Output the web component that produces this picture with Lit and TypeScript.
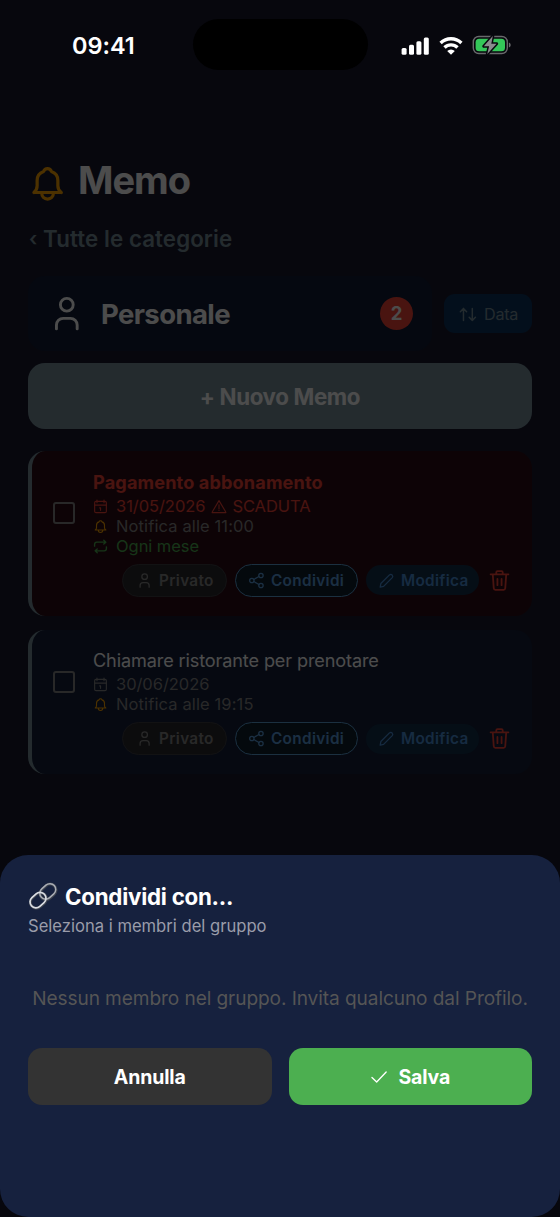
import { LitElement, html, css, svg, nothing } from "lit";
import { customElement, property } from "lit/decorators.js";

const shapes: Record<string, unknown> = {
  bell: svg`<path d="M78 374h360M78 374c30-26 42-52 42-88v-70c0-60 38-102 84-118 8-22 28-36 52-36s44 14 52 36c46 16 84 58 84 118v70c0 36 12 62 44 88M180 378c0 52 34 82 77 82s77-30 77-82"/>`,
  person: svg`<circle cx="260" cy="141" r="84"/><path d="M124 458v-50a88 88 0 0 1 88-88h96a88 88 0 0 1 88 88v50"/>`,
  sort: svg`<path d="M60 196l80-82 80 82M140 114v306M286 338l80 82 80-82M366 420V114"/>`,
  calendar: svg`<rect x="56" y="80" width="400" height="384" rx="48"/><path d="M136 36v90M376 36v90M56 210h400M228 304h30v84"/>`,
  warning: svg`<path d="M256 56L24 444a12 12 0 0 0 10 20h444a12 12 0 0 0 10-20zM256 200v136M256 384v10"/>`,
  repeat: svg`<path d="M368 42l70 66-70 66M430 108H130a76 76 0 0 0-76 76v60M144 470l-70-66 70-66M82 404h300a76 76 0 0 0 76-76v-60"/>`,
  share: svg`<circle cx="116" cy="256" r="66"/><circle cx="390" cy="104" r="66"/><circle cx="390" cy="408" r="66"/><path d="M174 224l158-88M174 288l158 88"/>`,
  pencil: svg`<path d="M66 452l20-104L346 88q44-34 80 4 36 40 4 78L168 432z"/>`,
  trash: svg`<path d="M106 118l22 310c2 22 16 36 36 36h184c20 0 34-14 36-36l22-310M58 118h396M184 112V76a28 28 0 0 1 28-28h88a28 28 0 0 1 28 28v36M210 220v140M302 220v140"/>`,
  check: svg`<path d="M460 116L190 400 56 270"/>`,
};

@customElement("line-icon")
class LineIcon extends LitElement {
  @property() name = "bell";
  static styles = css`
    :host { display: block; flex: none; width: 17px; height: 17px; }
    svg { display: block; width: 100%; height: 100%; fill: none; stroke: currentColor;
      stroke-width: var(--stroke, 38); stroke-linecap: round; stroke-linejoin: round; overflow: visible; }
  `;
  render() {
    return html`<svg viewBox="0 0 512 512">${shapes[this.name]}</svg>`;
  }
}

@customElement("status-bar")
class StatusBar extends LitElement {
  static styles = css`
    :host { display: grid; grid-template-columns: 192.5px 175px 192.5px; height: 90px; }
    .time { padding: 31px 0 0 72px; color: #fff; font-size: 23.500px; font-weight: 600; line-height: 30px; letter-spacing: -0.050px; }
    .island { height: 51px; margin-top: 19px; border-radius: 26px; background: #000; }
    .icons { display: flex; align-items: flex-start; padding: 36.500px 0 0 33.500px; }
    .signal { width: 28px; height: 18px; }
    .wifi { width: 24px; height: 18px; margin-left: 9.500px; }
    .battery { width: 39px; height: 20px; margin-left: 9.500px; margin-top: -1.500px; }
  `;
  render() {
    return html`
      <div class="time">09:41</div>
      <div class="island"></div>
      <div class="icons">
        <svg class="signal" viewBox="0 0 28 18" fill="#fff">
          <rect x=".6" y="11" width="5" height="6.800" rx="1.500" /><rect x="8" y="7.800" width="5" height="10" rx="1.500" />
          <rect x="15.400" y="4.200" width="5" height="13.600" rx="1.500" /><rect x="22.800" y=".4" width="5" height="17.400" rx="1.500" />
        </svg>
        <svg class="wifi" viewBox="0 0 24 18">
          <path d="M1.600 6a15 15 0 0 1 20.800 0M5.500 10.500a9.300 9.300 0 0 1 13 0" fill="none" stroke="#fff" stroke-width="3.400" />
          <path d="M8.200 13.900a5.500 5.500 0 0 1 7.600 0L12 17.700z" fill="#fff" />
        </svg>
        <svg class="battery" viewBox="0 0 39 20">
          <rect x="1.300" y="1.500" width="34" height="17" rx="5.500" fill="none" stroke="#69696c" stroke-width="1.400" />
          <path d="M36.900 7.500v5c2.400-.8 2.400-4.200 0-5z" fill="#69696c" />
          <rect x="3.600" y="3.700" width="29.400" height="12.600" rx="3.600" fill="#34c759" />
          <path d="M20.800 1L11.800 11.300h5.300L15.300 19l9.300-10.300H19.300z" fill="#8b8b8e" stroke="#08080e" stroke-width="3" paint-order="stroke" stroke-linejoin="round" />
        </svg>
      </div>
    `;
  }
}

interface Memo {
  title: string;
  date: string;
  time: string;
  repeat?: string;
  overdue?: boolean;
}

const memos: Memo[] = [
  { title: "Pagamento abbonamento", date: "31/05/2026", time: "11:00", repeat: "Ogni mese", overdue: true },
  { title: "Chiamare ristorante per prenotare", date: "30/06/2026", time: "19:15" },
];

@customElement("memo-card")
class MemoCard extends LitElement {
  @property({ attribute: false }) memo!: Memo;
  static styles = css`
    .card { box-sizing: border-box; height: 144px; padding: 19px 21px 0 21px; border-left: 4px solid #78909c; border-radius: 17px;
      background: #141f3a; display: grid; grid-template-columns: 40px 1fr; align-content: start; color: #888; }
    .card.overdue { height: 165px; padding-top: 20px; background: #2d0d16; }
    .box { box-sizing: border-box; width: 22px; height: 22px; margin-top: 22px; border: 2px solid #888; border-radius: 3px; }
    .overdue .box { margin-top: 31px; }
    .title { color: #fff; font-size: 18.100px; line-height: 22px; height: 25px; white-space: nowrap; letter-spacing: -0.120px; }
    .overdue .title { color: #f44336; font-weight: 700; letter-spacing: 0.150px; }
    .row { display: flex; align-items: center; height: 20px; font-size: 16.500px; letter-spacing: 0.120px; white-space: nowrap; }
    .date { letter-spacing: -0.060px; }
    .row line-icon { width: 15px; height: 15px; margin-right: 8px; }
    .overdue .date { color: #f44336; }
    .row .warn { margin: 0 5px 0 6px; width: 16px; }
    .bell { color: #ffa500; }
    .repeat { color: #4caf50; letter-spacing: -0.050px; }
    .repeat line-icon { --stroke: 46; }
    .actions { grid-column: 1 / 3; display: flex; align-items: center; justify-content: flex-end; margin-top: 8px; height: 33px; }
    .overdue .actions { margin-top: 7.500px; }
    .chip { box-sizing: border-box; display: flex; align-items: center; height: 33px; font-size: 15.300px; font-weight: 600;
      border-radius: 17px; letter-spacing: 0.350px; white-space: nowrap; }
    .chip line-icon { width: 17px; height: 17px; margin-right: 6px; }
    .private { width: 105px; padding-left: 13px; border: 1px solid #3d3d42; background: #2a2a2e; color: #888; margin-right: 8px; }
    .share { width: 122.500px; padding-left: 12px; border: 1.500px solid #5aa0d8; background: #10202c; color: #5a9fe0; margin-right: 8.500px; }
    .edit { width: 113px; height: 30px; padding-left: 12px; background: #13304c; color: #4a90d9; }
    .trash { width: 23px; height: 23px; margin: 0 0 0 9px; color: #f44336; --stroke: 40; }
  `;
  render() {
    const m = this.memo;
    return html`
      <div class="card ${m.overdue ? "overdue" : ""}">
        <div class="box"></div>
        <div>
          <div class="title">${m.title}</div>
          <div class="row date">
            <line-icon name="calendar"></line-icon>${m.date}${m.overdue
              ? html`<line-icon class="warn" name="warning"></line-icon>SCADUTA`
              : nothing}
          </div>
          <div class="row"><line-icon class="bell" name="bell"></line-icon>Notifica alle ${m.time}</div>
          ${m.repeat ? html`<div class="row repeat"><line-icon name="repeat"></line-icon>${m.repeat}</div>` : nothing}
        </div>
        <div class="actions">
          <div class="chip private"><line-icon name="person"></line-icon>Privato</div>
          <div class="chip share"><line-icon name="share"></line-icon>Condividi</div>
          <div class="chip edit"><line-icon name="pencil"></line-icon>Modifica</div>
          <line-icon class="trash" name="trash"></line-icon>
        </div>
      </div>
    `;
  }
}

@customElement("share-sheet")
class ShareSheet extends LitElement {
  static styles = css`
    :host { display: block; box-sizing: border-box; height: 362px; padding: 26px 28px 0; border-radius: 28px; background: #16213e; color: #fff; }
    .heading { display: flex; align-items: center; height: 30px; font-size: 22.300px; font-weight: 700; letter-spacing: -0.230px; }
    .link { width: 30px; height: 30px; margin-right: 7px; overflow: visible; }
    .hint { margin-top: 4px; font-size: 16.600px; line-height: 22px; letter-spacing: 0; color: #9a9caa; }
    .empty { margin: 49px 0 38px; text-align: center; font-size: 19.100px; line-height: 24px; letter-spacing: -0.090px; color: #555; white-space: nowrap; }
    .buttons { display: grid; grid-template-columns: 1fr 1fr; gap: 17px; }
    .button { display: flex; align-items: center; justify-content: center; height: 57px; border-radius: 14px; background: #333;
      font-size: 19.500px; font-weight: 700; letter-spacing: -0.150px; }
    .save { background: #4caf50; }
    .save line-icon { width: 18px; height: 18px; margin-right: 10px; }
  `;
  render() {
    return html`
      <div class="heading">
        <svg class="link" viewBox="0 0 30 30" fill="none">
          <g stroke="#3a404c" stroke-width="3">
            <rect x="11.400" y="4.900" width="17.400" height="11.800" rx="5.900" transform="rotate(-42 20.100 10.800)" />
            <rect x="1.700" y="13.600" width="17.400" height="11.800" rx="5.900" transform="rotate(-42 10.400 19.500)" />
          </g>
          <rect x="11.100" y="4.500" width="17.400" height="11.800" rx="5.900" transform="rotate(-42 19.800 10.400)" stroke="#a9adb5" stroke-width="1.500" />
          <rect x="1.300" y="13.200" width="17.400" height="11.800" rx="5.900" transform="rotate(-42 10 19.100)" stroke="#dadde3" stroke-width="1.700" />
        </svg>
        Condividi con...
      </div>
      <div class="hint">Seleziona i membri del gruppo</div>
      <div class="empty">Nessun membro nel gruppo. Invita qualcuno dal Profilo.</div>
      <div class="buttons">
        <div class="button">Annulla</div>
        <div class="button save"><line-icon name="check"></line-icon>Salva</div>
      </div>
    `;
  }
}

@customElement("app-root")
class AppRoot extends LitElement {
  static styles = css`
    :host { display: block; position: relative; width: 560px; height: 1217px; overflow: hidden; background: #1a1a2e;
      font-family: Inter, "Liberation Sans", sans-serif; }
    .page { box-sizing: border-box; height: 1217px; padding: 157px 28px 0; }
    .head { display: flex; align-items: center; height: 46px; }
    .head line-icon { width: 39px; height: 39px; margin: 6px 11px 0 0; color: #ffa500; --stroke: 42; }
    .head-title { color: #fff; font-size: 38px; font-weight: 700; line-height: 46px; letter-spacing: -1px; }
    .back { display: flex; margin-top: 22px; font-size: 22.300px; font-weight: 600; line-height: 28px; color: #78909c; letter-spacing: 0.100px; }
    .chevron { width: 14px; padding-left: 1px; font-size: 20px; }
    .filters { display: flex; align-items: center; gap: 12px; margin-top: 23px; }
    .category { box-sizing: border-box; display: flex; align-items: center; width: 404px; height: 75px; padding: 0 19px; border-radius: 17px;
      background: #111c36; color: #fff; }
    .category line-icon { width: 39px; height: 39px; margin-right: 15px; }
    .category-name { flex: 1; font-size: 27.500px; font-weight: 700; letter-spacing: -0.600px; }
    .count { width: 33px; height: 33px; border-radius: 50%; background: #f44336; text-align: center; font-size: 18.500px; font-weight: 700; line-height: 33px; }
    .sort { box-sizing: border-box; display: flex; align-items: center; width: 88px; height: 39px; padding-left: 14px; border-radius: 11px;
      background: #0a3460; color: #78909c; font-size: 16.200px; letter-spacing: -0.300px; }
    .sort line-icon { width: 20px; height: 20px; margin-right: 6px; }
    .new { box-sizing: border-box; margin-top: 12px; height: 66px; border-radius: 17px; background: #78909c; color: #fff; text-align: center;
      font-size: 22.300px; font-weight: 700; line-height: 67px; letter-spacing: -0.350px; }
    .list { display: grid; gap: 14px; margin-top: 22px; }
    .backdrop { position: absolute; inset: 0; background: rgba(0, 0, 0, 0.7); }
    status-bar { position: absolute; left: 0; top: 0; width: 560px; }
    share-sheet { position: absolute; left: 0; bottom: 0; width: 560px; }
  `;
  render() {
    return html`
      <div class="page">
        <div class="head"><line-icon name="bell"></line-icon><div class="head-title">Memo</div></div>
        <div class="back"><span class="chevron">‹</span>Tutte le categorie</div>
        <div class="filters">
          <div class="category">
            <line-icon name="person"></line-icon>
            <div class="category-name">Personale</div>
            <div class="count">2</div>
          </div>
          <div class="sort"><line-icon name="sort"></line-icon>Data</div>
        </div>
        <div class="new">+ Nuovo Memo</div>
        <div class="list">${memos.map((m) => html`<memo-card .memo=${m}></memo-card>`)}</div>
      </div>
      <div class="backdrop"></div>
      <share-sheet></share-sheet>
      <status-bar></status-bar>
    `;
  }
}
